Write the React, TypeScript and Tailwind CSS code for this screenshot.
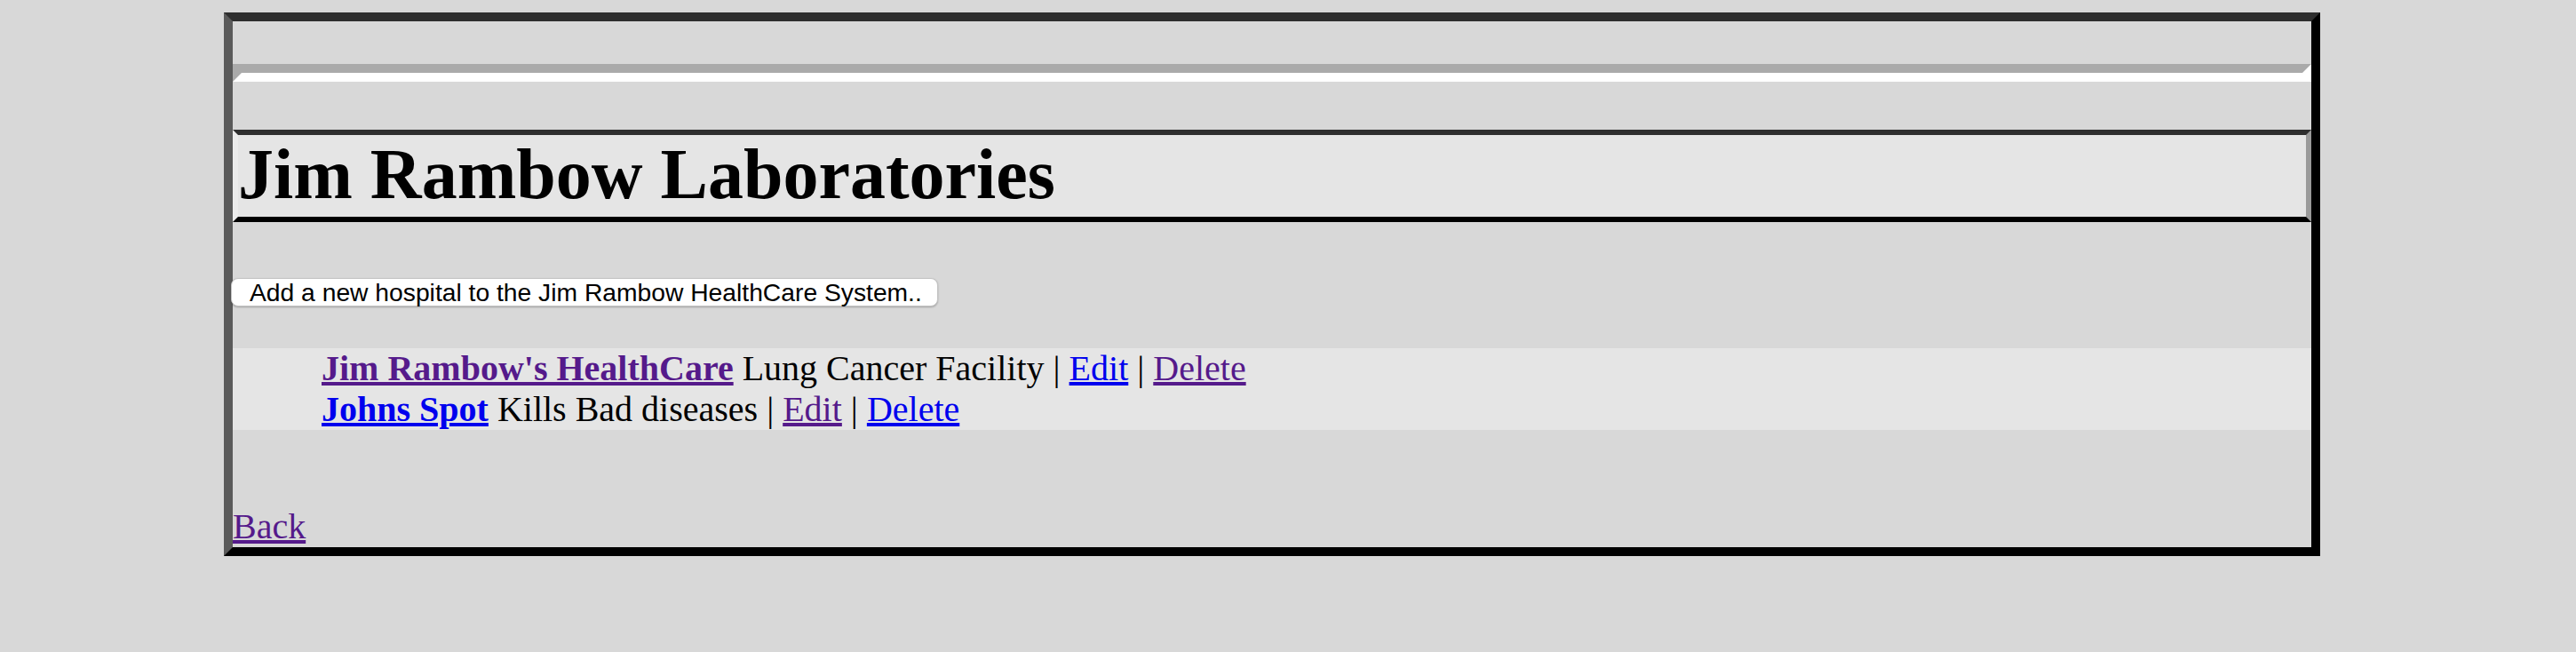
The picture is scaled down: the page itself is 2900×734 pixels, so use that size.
import React from 'react';

const visited = 'text-[#551a8b] underline';
const fresh = 'text-[#0000ee] underline';

export default function App() {
  return (
    <div className="min-h-screen bg-[#d8d8d8] pt-[14px] text-black" style={{ fontFamily: '"Liberation Serif", "Times New Roman", serif' }}>
      <div className="ml-[252px] w-[2360px] border-[10px] border-t-[#2e2e2e] border-l-[#5a5a5a] border-r-black border-b-black">
        {/* hr */}
        <div className="mt-[48px] h-0 border-[10px] border-t-[#aaaaaa] border-l-[#aaaaaa] border-b-white border-r-white" />

        <h1 className="mt-[54px] border-[6px] border-t-[#2e2e2e] border-l-[#ebebeb] border-r-[#9a9a9a] border-b-black bg-[#e5e5e5] pb-[4px] text-[80px] font-bold leading-[88px]">
          Jim Rambow Laboratories
        </h1>

        <div className="mt-[63px] h-[32px]">
          <button
            className="-ml-[2px] h-[32px] rounded-[8px] border border-[#c4c4c4] bg-white pl-[20px] pr-[17px] text-[28.25px] leading-[30px] text-black shadow-[0_1px_2px_rgba(0,0,0,0.25)]"
            style={{ fontFamily: '"Liberation Sans", Arial, sans-serif' }}
          >
            Add a new hospital to the Jim Rambow HealthCare System..
          </button>
        </div>

        <ul className="mt-[47px] bg-[#e5e5e5] pl-[100px] text-[40px] leading-[46px]">
          <li>
            <a href="#" className={`${visited} font-bold`}>Jim Rambow's HealthCare</a> Lung Cancer Facility |{' '}
            <a href="#" className={fresh}>Edit</a> |{' '}
            <a href="#" className={visited}>Delete</a>
          </li>
          <li>
            <a href="#" className={`${fresh} font-bold`}>Johns Spot</a> Kills Bad diseases |{' '}
            <a href="#" className={visited}>Edit</a> |{' '}
            <a href="#" className={fresh}>Delete</a>
          </li>
        </ul>

        <div className="pt-[86px] text-[40px] leading-[46px]">
          <a href="#" className={visited}>Back</a>
        </div>
      </div>
    </div>
  );
}
